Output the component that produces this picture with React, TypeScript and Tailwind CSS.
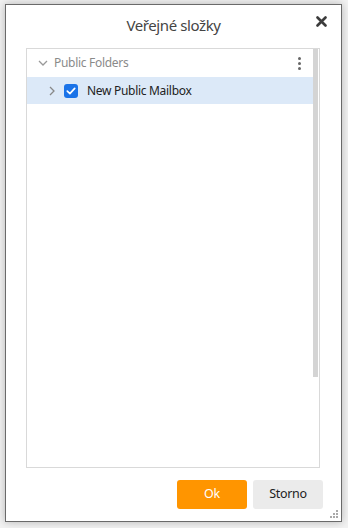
import React from "react";

export default function App() {
  return (
    <div
      className="w-[348px] h-[528px] bg-[#f2f2f2] pt-[4px] pl-[5px]"
      style={{ fontFamily: '"Noto Sans", "Open Sans", sans-serif' }}
    >
      <div className="relative w-[337px] h-[518px] bg-white border border-[#6a6a6a] shadow-[0_0_8px_rgba(0,0,0,0.25)] flex flex-col">
        <div className="h-[43px] flex items-center justify-center relative">
          <span className="text-[15px] tracking-[-0.4px] text-[#444] leading-none -mt-[3px]">Veřejné složky</span>
          <svg className="absolute right-[14px] top-[11px]" width="11" height="11" viewBox="0 0 11 11">
            <path d="M1.5 1.5 L9.5 9.5 M9.5 1.5 L1.5 9.5" stroke="#3c3c3c" strokeWidth="2.6" strokeLinecap="round" />
          </svg>
        </div>
        <div className="ml-[20px] w-[294px] h-[420px] border border-[#d9d9d9] relative flex">
          <div className="flex-1 flex flex-col">
            <div className="h-[28px] flex items-center relative">
              <svg className="ml-[11px]" width="10" height="6" viewBox="0 0 10 6">
                <path d="M1 1 L5 5 L9 1" stroke="#999" strokeWidth="1.3" fill="none" />
              </svg>
              <span className="ml-[6px] text-[12px] tracking-[-0.3px] text-[#8a8a8a]">Public Folders</span>
              <div className="absolute right-[12px] top-[8px] flex flex-col gap-[2px]">
                <span className="w-[3px] h-[3px] rounded-full bg-[#666]" />
                <span className="w-[3px] h-[3px] rounded-full bg-[#666]" />
                <span className="w-[3px] h-[3px] rounded-full bg-[#666]" />
              </div>
            </div>
            <div className="h-[27px] bg-[#dce9f8] flex items-center">
              <svg className="ml-[22px]" width="6" height="10" viewBox="0 0 6 10">
                <path d="M1 1 L5 5 L1 9" stroke="#888" strokeWidth="1.3" fill="none" />
              </svg>
              <span className="ml-[9px] w-[14px] h-[14px] rounded-[3px] bg-[#1a73e8] flex items-center justify-center">
                <svg width="10" height="8" viewBox="0 0 10 8">
                  <path d="M1.3 4.2 L3.9 6.6 L8.7 1.4" stroke="white" strokeWidth="1.7" fill="none" strokeLinecap="round" strokeLinejoin="round" />
                </svg>
              </span>
              <span className="ml-[9px] text-[12px] tracking-[-0.3px] text-[#222]">New Public Mailbox</span>
            </div>
          </div>
          <div className="w-[5px] h-[328px] bg-[#d4d4d4] mr-[1px]" />
        </div>
        <div className="flex justify-end gap-[6px] mt-[12px] mr-[18px]">
          <button className="w-[70px] h-[29px] rounded-[3px] bg-[#ff9500] text-white text-[12.5px] tracking-[-0.3px]">Ok</button>
          <button className="w-[70px] h-[29px] rounded-[3px] bg-[#ebebeb] text-[#222] text-[12.5px] tracking-[-0.3px]">Storno</button>
        </div>
        <div className="absolute right-[3px] bottom-[3px] grid grid-cols-3 gap-[1px] w-[8px] h-[8px]">
          <span />
          <span />
          <span className="w-[2px] h-[2px] bg-[#aaa]" />
          <span />
          <span className="w-[2px] h-[2px] bg-[#aaa]" />
          <span className="w-[2px] h-[2px] bg-[#aaa]" />
          <span className="w-[2px] h-[2px] bg-[#aaa]" />
          <span className="w-[2px] h-[2px] bg-[#aaa]" />
          <span className="w-[2px] h-[2px] bg-[#aaa]" />
        </div>
      </div>
    </div>
  );
}
